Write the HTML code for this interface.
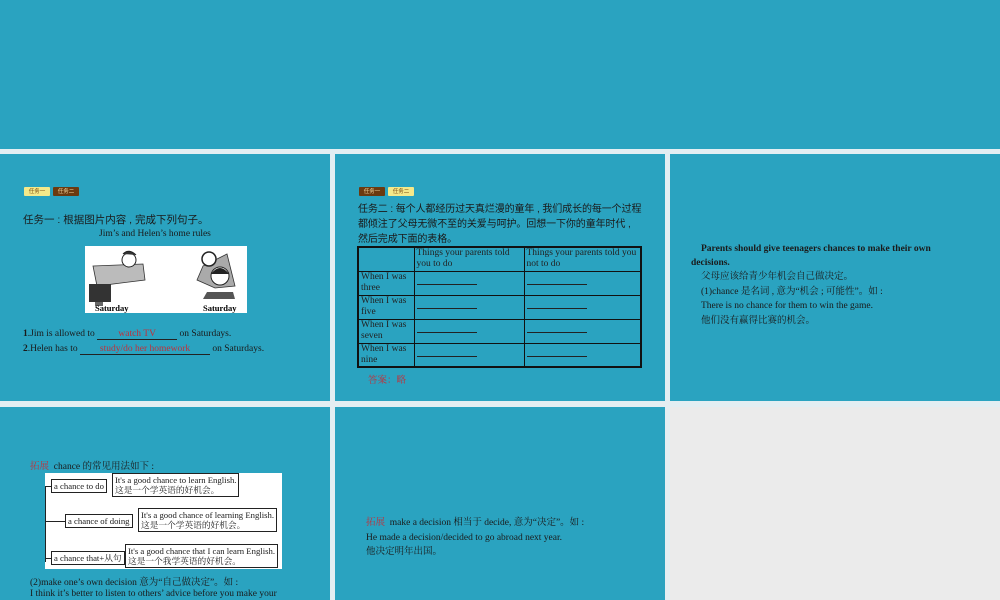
<!DOCTYPE html>
<html><head><meta charset="utf-8"><style>
*{margin:0;padding:0;box-sizing:border-box}
body{width:1000px;height:600px;background:#e3eef2;position:relative;overflow:hidden;font-family:"Liberation Serif","Noto Serif CJK SC",serif;color:#1a1a1a}
.p{position:absolute;background:#2aa3c0;overflow:hidden}
.a{position:absolute;white-space:nowrap}
.s{font-family:"Liberation Sans","Noto Sans CJK SC",sans-serif}
.tag{position:absolute;font-size:5.5px;line-height:8px;height:9px;width:26px;text-align:center;border-radius:1px;font-family:"Noto Sans CJK SC",sans-serif}
.y{background:#f5e98a;color:#7a4a10}.b{background:#6b3a10;color:#f5d9a0}
.red{color:#c0303a}
table{border-collapse:collapse}
td{border:1px solid #111;font-size:9.5px;line-height:11px;vertical-align:top;padding:0 2px;color:#222}
.ln{display:block;width:60px;border-bottom:1px solid #222;margin-top:1px}
.bx{position:absolute;border:1px solid #222;background:#fff;font-size:8.7px;line-height:10px;padding:1px 2px;white-space:nowrap}
</style></head><body>
<div class="p" style="left:0;top:0;width:1000px;height:149px"></div>

<div class="p" style="left:0;top:154px;width:330px;height:247px">
 <div class="tag y" style="left:24px;top:33px">任务一</div>
 <div class="tag b" style="left:53px;top:33px">任务二</div>
 <div class="a s" style="left:23px;top:58px;font-size:10.5px">任务一 : 根据图片内容 , 完成下列句子。</div>
 <div class="a" style="left:99px;top:75px;font-size:9.5px">Jim’s and Helen’s home rules</div>
 <div style="position:absolute;left:85px;top:92px;width:162px;height:67px;background:#fff">
  <svg width="162" height="67" viewBox="0 0 162 67">
   <path d="M8 20 L58 18 L60 34 L12 40 Z" fill="#bbb" stroke="#333" stroke-width=".8"/>
   <rect x="4" y="38" width="22" height="18" fill="#333"/><rect x="10" y="56" width="8" height="4" fill="#666"/>
   <circle cx="44" cy="14" r="7" fill="#fff" stroke="#222"/><path d="M38 8 Q44 2 51 9" stroke="#222" fill="#333"/>
   <path d="M118 20 L142 8 L150 40 L130 42 L112 34 Z" fill="#aaa" stroke="#333" stroke-width=".8"/>
   <circle cx="124" cy="13" r="7" fill="#fff" stroke="#222" stroke-width="1.5"/>
   <circle cx="135" cy="30" r="9" fill="#fff" stroke="#222"/><path d="M126 28 Q135 16 144 28" fill="#222"/>
   <path d="M118 53 L150 53 L148 46 L122 46 Z" fill="#555"/>
   <text x="10" y="65" font-size="8.5" font-weight="bold" font-family="Liberation Serif">Saturday</text>
   <text x="118" y="65" font-size="8.5" font-weight="bold" font-family="Liberation Serif">Saturday</text>
  </svg>
 </div>
 <div class="a" style="left:23px;top:175px;font-size:9.5px"><b>1</b>.Jim is allowed to <span style="display:inline-block;width:80px;border-bottom:1px solid #222;text-align:center" class="red">watch TV</span> on Saturdays.</div>
 <div class="a" style="left:23px;top:190px;font-size:9.5px"><b>2</b>.Helen has to <span style="display:inline-block;width:130px;border-bottom:1px solid #222;text-align:center" class="red">study/do her homework</span> on Saturdays.</div>
</div>

<div class="p" style="left:335px;top:154px;width:330px;height:247px">
 <div class="tag b" style="left:24px;top:33px">任务一</div>
 <div class="tag y" style="left:53px;top:33px">任务二</div>
 <div class="a s" style="left:23px;top:48px;font-size:10px;line-height:15px;letter-spacing:-0.1px">任务二 : 每个人都经历过天真烂漫的童年 , 我们成长的每一个过程<br>都倾注了父母无微不至的关爱与呵护。回想一下你的童年时代 ,<br>然后完成下面的表格。</div>
 <table style="position:absolute;left:22px;top:92px;width:285px;border:2px solid #111">
  <tr style="height:24px"><td style="width:56px"></td><td style="width:110px">Things your parents told you to do</td><td>Things your parents told you not to do</td></tr>
  <tr style="height:24px"><td>When I was three</td><td><br><span class="ln"></span></td><td><br><span class="ln"></span></td></tr>
  <tr style="height:24px"><td>When I was five</td><td><br><span class="ln"></span></td><td><br><span class="ln"></span></td></tr>
  <tr style="height:24px"><td>When I was seven</td><td><br><span class="ln"></span></td><td><br><span class="ln"></span></td></tr>
  <tr style="height:24px"><td>When I was nine</td><td><br><span class="ln"></span></td><td><br><span class="ln"></span></td></tr>
 </table>
 <div class="a red" style="left:33px;top:218px;font-size:9.5px">答案：略</div>
</div>

<div class="p" style="left:670px;top:154px;width:330px;height:247px;font-size:9.5px;line-height:14.5px">
 <div class="a" style="left:31px;top:88px;font-weight:bold">Parents should give teenagers chances to make their own</div>
 <div class="a" style="left:21px;top:102px;font-weight:bold">decisions.</div>
 <div class="a" style="left:31px;top:116px">父母应该给青少年机会自己做决定。</div>
 <div class="a" style="left:31px;top:131px">(1)chance 是名词 , 意为“机会 ; 可能性”。如 :</div>
 <div class="a" style="left:31px;top:145px">There is no chance for them to win the game.</div>
 <div class="a" style="left:31px;top:160px">他们没有赢得比赛的机会。</div>
</div>

<div class="p" style="left:0;top:407px;width:330px;height:193px;font-size:9.5px">
 <div class="a" style="left:30px;top:51px"><span class="red">拓展</span>&nbsp; chance 的常见用法如下 :</div>
 <div style="position:absolute;left:45px;top:66px;width:237px;height:96px;background:#fff">
  <div style="position:absolute;left:0;top:13px;width:1px;height:76px;background:#222"></div>
  <div style="position:absolute;left:0;top:13px;width:6px;height:1px;background:#222"></div>
  <div style="position:absolute;left:0;top:48px;width:20px;height:1px;background:#222"></div>
  <div style="position:absolute;left:0;top:85px;width:6px;height:1px;background:#222"></div>
  <div class="bx" style="left:6px;top:6px">a chance to do</div>
  <div class="bx" style="left:67px;top:0">It's a good chance to learn English.<br>这是一个学英语的好机会。</div>
  <div class="bx" style="left:20px;top:41px">a chance of doing</div>
  <div class="bx" style="left:93px;top:35px">It's a good chance of learning English.<br>这是一个学英语的好机会。</div>
  <div class="bx" style="left:6px;top:78px">a chance that+从句</div>
  <div class="bx" style="left:80px;top:71px">It's a good chance that I can learn English.<br>这是一个我学英语的好机会。</div>
 </div>
 <div class="a" style="left:30px;top:167px">(2)make one’s own decision 意为“自己做决定”。如 :</div>
 <div class="a" style="left:30px;top:182px">I think it’s better to listen to others’ advice before you make your</div>
</div>

<div class="p" style="left:335px;top:407px;width:330px;height:193px;font-size:9.5px;line-height:14.5px">
 <div class="a" style="left:31px;top:109px"><span class="red">拓展</span>&nbsp; make a decision 相当于 decide, 意为“决定”。如 :</div>
 <div class="a" style="left:31px;top:124px">He made a decision/decided to go abroad next year.</div>
 <div class="a" style="left:31px;top:138px">他决定明年出国。</div>
</div>

<div style="position:absolute;left:670px;top:407px;width:330px;height:193px;background:#ebebeb"></div>
</body></html>
